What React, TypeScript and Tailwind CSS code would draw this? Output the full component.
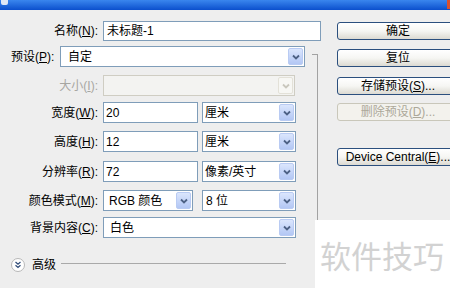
import React from "react";

const Chevron = ({ color = "#4d6185" }: { color?: string }) => (
  <svg width="8" height="6" viewBox="0 0 8 6">
    <path d="M1 1.5 L4 4.5 L7 1.5" fill="none" stroke={color} strokeWidth="1.8" />
  </svg>
);

const DropBtn = ({ disabled = false }: { disabled?: boolean }) =>
  disabled ? (
    <div className="mr-[1px] flex h-[17px] w-[15px] items-center justify-center rounded-[2px] border border-[#e3e1d8] bg-[#f7f7f4]">
      <Chevron color="#c9c7bd" />
    </div>
  ) : (
    <div className="mr-[1px] flex h-[17px] w-[15px] items-center justify-center rounded-[2px] border border-[#b9cbf3] bg-linear-to-b from-[#dbe6fd] to-[#b3c7f4]">
      <Chevron />
    </div>
  );

const Select = ({ w, text, pl = "pl-[2px]", disabled = false }: { w: string; text: string; pl?: string; disabled?: boolean }) => (
  <div
    className={`flex h-[21px] items-center justify-between border ${
      disabled ? "border-[#cfcdc3] bg-[#f3f3f1]" : "border-[#7f9db9] bg-white"
    } ${w}`}
  >
    <span className={`${pl} whitespace-nowrap`}>{text}</span>
    <DropBtn disabled={disabled} />
  </div>
);

const Input = ({ w, text }: { w: string; text: string }) => (
  <div className={`flex h-[21px] items-center border border-[#7f9db9] bg-white pl-[2px] ${w}`}>{text}</div>
);

const Label = ({ zh, k, gray = false }: { zh: string; k: string; gray?: boolean }) => (
  <div className={`w-[98px] shrink-0 text-right whitespace-nowrap ${gray ? "text-[#a7a6a2]" : ""}`}>
    {zh}(<span className="underline">{k}</span>):
  </div>
);

const Btn = ({ children, mt, disabled = false }: { children: React.ReactNode; mt: string; disabled?: boolean }) => (
  <div
    className={`${mt} flex h-[18px] w-[122px] items-center justify-center rounded-[3px] border whitespace-nowrap ${
      disabled
        ? "border-[#c9c7ba] bg-[#f3f2ed] text-[#aca899]"
        : "border-[#2b4f7e] bg-linear-to-b from-white via-[#f6f6f3] to-[#dcdad2]"
    }`}
  >
    {children}
  </div>
);

export default function App() {
  return (
    <div className="relative h-[288px] w-[450px] overflow-hidden bg-[#eeeeee] text-[12px] leading-none text-black [font-family:'Liberation_Sans','Noto_Sans_CJK_SC',sans-serif]">
      <div className="flex h-[10px] items-start justify-between bg-linear-to-b from-[#3a86ee] to-[#0b4fcd]">
        <div className="ml-[1px] h-[5px] w-[7px] rounded-b-[2px] bg-[#dfe8f6]" />
        <div className="h-[9px] w-[3px] bg-[#d9502f]" />
      </div>

      <div className="flex pt-[11px]">
        <div className="flex w-[322px] shrink-0 flex-col">
          <div className="flex h-[20px] items-center">
            <Label zh="名称" k="N" />
            <div className="ml-[5px] flex h-[20px] w-[218px] items-center border border-[#7f9db9] bg-white pl-[3px]">未标题-1</div>
          </div>

          <div className="mt-[5px] flex h-[21px] items-center">
            <div className="w-[60px] shrink-0 pl-[11px] whitespace-nowrap">
              预设(<span className="underline">P</span>):
            </div>
            <Select w="w-[245px]" text="自定" pl="pl-[7px]" />
          </div>

          <div className="mt-[8px] flex h-[21px] items-center">
            <Label zh="大小" k="I" gray />
            <div className="ml-[5px]">
              <Select w="w-[192px]" text="" disabled />
            </div>
          </div>

          <div className="mt-[6px] flex h-[21px] items-center">
            <Label zh="宽度" k="W" />
            <div className="ml-[5px]">
              <Input w="w-[95px]" text="20" />
            </div>
            <div className="ml-[4px]">
              <Select w="w-[94px]" text="厘米" />
            </div>
          </div>

          <div className="mt-[8px] flex h-[21px] items-center">
            <Label zh="高度" k="H" />
            <div className="ml-[5px]">
              <Input w="w-[95px]" text="12" />
            </div>
            <div className="ml-[4px]">
              <Select w="w-[94px]" text="厘米" />
            </div>
          </div>

          <div className="mt-[9px] flex h-[21px] items-center">
            <Label zh="分辨率" k="R" />
            <div className="ml-[5px]">
              <Input w="w-[95px]" text="72" />
            </div>
            <div className="ml-[4px]">
              <Select w="w-[94px]" text="像素/英寸" />
            </div>
          </div>

          <div className="mt-[8px] flex h-[21px] items-center">
            <Label zh="颜色模式" k="M" />
            <div className="ml-[5px]">
              <Select w="w-[90px]" text="RGB 颜色" pl="pl-[5px]" />
            </div>
            <div className="ml-[9px]">
              <Select w="w-[94px]" text="8 位" pl="pl-[3px]" />
            </div>
          </div>

          <div className="mt-[6px] flex h-[21px] items-center">
            <Label zh="背景内容" k="C" />
            <div className="ml-[5px]">
              <Select w="w-[193px]" text="白色" pl="pl-[6px]" />
            </div>
          </div>

          <div className="mt-[20px] flex h-[14px] items-center">
            <div className="ml-[11px] flex h-[14px] w-[14px] items-center justify-center rounded-full border border-[#b8b8b8] bg-white">
              <svg width="8" height="8" viewBox="0 0 8 8">
                <path d="M1.5 1 L4 3.2 L6.5 1 M1.5 4.3 L4 6.5 L6.5 4.3" fill="none" stroke="#35507c" strokeWidth="1.3" />
              </svg>
            </div>
            <span className="ml-[7px]">高级</span>
            <div className="mb-[3px] ml-[5px] mr-[36px] h-0 flex-1 border-t border-[#a9a9a9]" />
          </div>
        </div>

        <div className="ml-[15px] flex shrink-0 flex-col">
          <Btn mt="mt-[1px]">确定</Btn>
          <Btn mt="mt-[9px]">复位</Btn>
          <Btn mt="mt-[10px]">
            存储预设(<span className="underline">S</span>)...
          </Btn>
          <Btn mt="mt-[8px]" disabled>
            删除预设(<span className="underline">D</span>)...
          </Btn>
          <Btn mt="mt-[27px]">
            Device Central(<span className="underline">E</span>)...
          </Btn>
        </div>
      </div>

      <div className="absolute left-[312px] top-[54px] h-[166px] w-[6px] border-r border-t border-[#a2a2a2]" />

      <div className="absolute bottom-0 right-0 flex h-[68px] w-[135px] items-center bg-white pl-[5px] text-[31px] text-[#d2d2d2] [font-family:'Noto_Sans_CJK_SC',sans-serif]">
        软件技巧
      </div>
    </div>
  );
}
